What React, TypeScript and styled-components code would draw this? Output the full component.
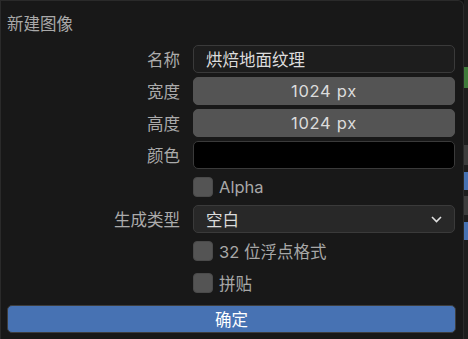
import * as React from 'react';
import styled, { createGlobalStyle } from 'styled-components';

const GlobalStyle = createGlobalStyle`
  html, body {
    margin: 0;
    padding: 0;
    background: #111111;
  }
  body {
    font-family: Inter, "Noto Sans CJK SC", sans-serif;
    -webkit-font-smoothing: antialiased;
  }
`;

const Page = styled.div`
  display: flex;
  width: 468px;
  height: 339px;
  overflow: hidden;
`;

const Panel = styled.div`
  box-sizing: border-box;
  width: 464px;
  height: 339px;
  background: #181818;
  border: 1px solid #2a2a2a;
  border-bottom: 0;
  border-radius: 0 6px 0 0;
  padding: 12px 8px 0 6px;
`;

const Title = styled.div`
  font-family: "Noto Sans CJK SC", sans-serif;
  font-size: 16.5px;
  line-height: 20px;
  color: #a9a9a9;
  height: 32px;
`;

const Form = styled.div`
  display: grid;
  grid-template-columns: 173px 1fr;
  column-gap: 13px;
  row-gap: 4px;
`;

const Label = styled.div`
  font-family: "Noto Sans CJK SC", sans-serif;
  font-size: 16.5px;
  color: #ababab;
  text-align: right;
  line-height: 28px;
  height: 28px;
`;

const Field = styled.div<{ $variant: 'text' | 'number' | 'color' | 'menu' }>`
  box-sizing: border-box;
  height: 28px;
  border-radius: 5px;
  display: flex;
  align-items: center;
  font-size: 16.5px;
  color: #dcdcdc;
  font-family: Inter, "Noto Sans CJK SC", sans-serif;
  letter-spacing: ${p => (p.$variant === 'number' ? '0.7px' : '0')};
  justify-content: ${p => (p.$variant === 'number' ? 'center' : 'space-between')};
  padding: 0 12px;
  background: ${p =>
    p.$variant === 'number'
      ? '#545454'
      : p.$variant === 'color'
      ? '#000000'
      : p.$variant === 'menu'
      ? '#282828'
      : '#1d1d1d'};
  border: 1px solid
    ${p => (p.$variant === 'number' ? '#545454' : '#3a3a3a')};
`;

const CheckRow = styled.label`
  grid-column: 2;
  display: flex;
  align-items: center;
  gap: 6px;
  height: 28px;
  font-size: 16.5px;
  color: #a8a8a8;
  font-family: Inter, "Noto Sans CJK SC", sans-serif;
`;

const Box = styled.span`
  box-sizing: border-box;
  width: 20px;
  height: 20px;
  border-radius: 4px;
  background: #545454;
  border: 1px solid #4a4a4a;
`;

const Confirm = styled.button`
  box-sizing: border-box;
  display: block;
  width: 449px;
  height: 28px;
  margin-top: 8px;
  margin-left: 0;
  background: #4772b3;
  border: 1px solid #3d3d3d;
  border-radius: 5px;
  color: #ffffff;
  font-family: "Noto Sans CJK SC", sans-serif;
  font-size: 16.5px;
  padding: 0;
`;

const Strip = styled.div`
  width: 4px;
  height: 339px;
  background: #1d1d1d;
  display: flex;
  flex-direction: column;
`;

const Chip = styled.div<{ $color: string; $top: number; $h: number }>`
  margin-top: ${p => p.$top}px;
  height: ${p => p.$h}px;
  background: ${p => p.$color};
`;

const Chevron = () => (
  <svg width="11" height="7" viewBox="0 0 11 7">
    <path d="M1 1l4.5 4.5L10 1" fill="none" stroke="#e0e0e0" strokeWidth="1.6" />
  </svg>
);

export default function App() {
  return (
    <Page>
      <GlobalStyle />
      <Panel>
        <Title>新建图像</Title>
        <Form>
          <Label>名称</Label>
          <Field $variant="text">烘焙地面纹理</Field>
          <Label>宽度</Label>
          <Field $variant="number">1024 px</Field>
          <Label>高度</Label>
          <Field $variant="number">1024 px</Field>
          <Label>颜色</Label>
          <Field $variant="color" />
          <CheckRow>
            <Box />
            Alpha
          </CheckRow>
          <Label>生成类型</Label>
          <Field $variant="menu">
            <span>空白</span>
            <Chevron />
          </Field>
          <CheckRow>
            <Box />
            32 位浮点格式
          </CheckRow>
          <CheckRow>
            <Box />
            拼贴
          </CheckRow>
        </Form>
        <Confirm>确定</Confirm>
      </Panel>
      <Strip>
        <Chip $color="#3f7a3a" $top={67} $h={21} />
        <Chip $color="#3d3d3d" $top={57} $h={20} />
        <Chip $color="#4772b3" $top={7} $h={18} />
        <Chip $color="#3d3d3d" $top={6} $h={19} />
        <Chip $color="#4772b3" $top={7} $h={18} />
      </Strip>
    </Page>
  );
}
